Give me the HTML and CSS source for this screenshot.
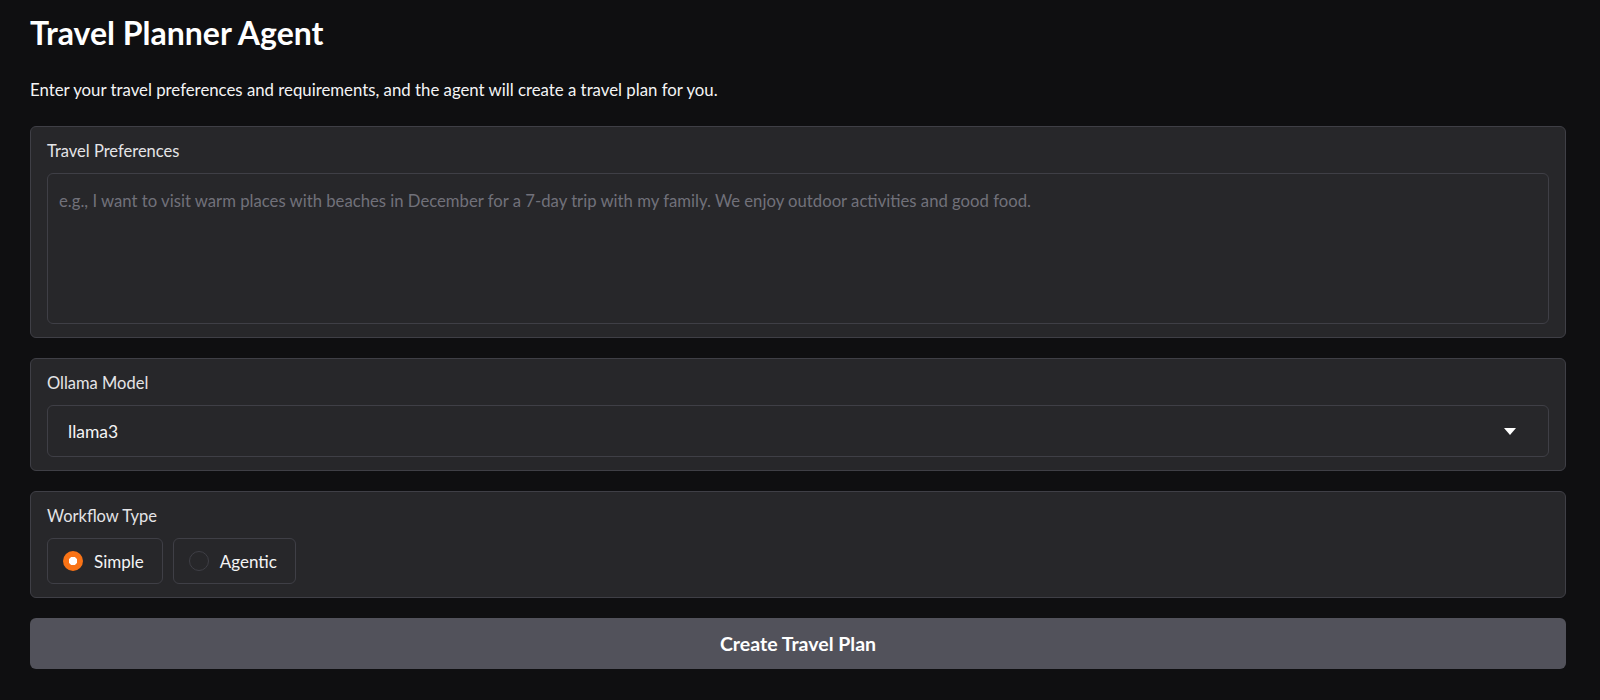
FILE: index.html
```html
<!DOCTYPE html>
<html lang="en">
<head>
  <meta charset="UTF-8">
  <meta name="viewport" content="width=device-width, initial-scale=1.0">
  <title>Travel Planner Agent</title>
  <link rel="stylesheet" href="styles.css">
</head>
<body>
  <div class="container">
    <!-- Header -->
    <h1 class="title">Travel Planner Agent</h1>
    <p class="intro">Enter your travel preferences and requirements, and the agent will create a travel plan for you.</p>

    <!-- Travel preferences -->
    <div class="block">
      <label class="block-label" for="prefs">Travel Preferences</label>
      <textarea id="prefs" class="prefs-input" placeholder="e.g., I want to visit warm places with beaches in December for a 7-day trip with my family. We enjoy outdoor activities and good food."></textarea>
    </div>

    <!-- Model picker -->
    <div class="block">
      <span class="block-label">Ollama Model</span>
      <div class="dropdown">
        <span class="dropdown-value">llama3</span>
        <svg class="dropdown-arrow" width="12" height="7" viewBox="0 0 12 7"><path d="M0 0 H12 L6 7 Z" fill="#fff"/></svg>
      </div>
    </div>

    <!-- Workflow type -->
    <div class="block">
      <span class="block-label">Workflow Type</span>
      <div class="radio-row">
        <label class="radio-chip">
          <span class="radio-dot checked"></span>
          <span>Simple</span>
        </label>
        <label class="radio-chip">
          <span class="radio-dot"></span>
          <span>Agentic</span>
        </label>
      </div>
    </div>

    <button class="submit-btn">Create Travel Plan</button>
  </div>
</body>
</html>
```

FILE: styles.css
```css
/* Basic reset */
* {
  margin: 0;
  padding: 0;
  box-sizing: border-box;
}

body {
  font-family: Lato, "Open Sans", sans-serif;
  background-color: #0f0f11;
  color: #f4f4f5;
}

.container {
  width: 1536px;
  margin-left: 30px;
  padding-top: 14px;
  display: flex;
  flex-direction: column;
}

/* Header */
.title {
  font-size: 32px;
  font-weight: 700;
  line-height: 38px;
  color: #fff;
}

.intro {
  font-size: 16.8px;
  line-height: 24px;
  margin-top: 26px;
  margin-bottom: 24px;
}

/* Panels */
.block {
  background-color: #27272a;
  border: 1px solid #3f3f46;
  border-radius: 6px;
  padding: 12px 16px 13px;
  margin-bottom: 20px;
  display: flex;
  flex-direction: column;
}

.block-label {
  font-size: 16.5px;
  line-height: 24px;
  margin-bottom: 10px;
  color: #e4e4e7;
}

.prefs-input {
  height: 151px;
  resize: none;
  background-color: #27272a;
  border: 1px solid #3f3f46;
  border-radius: 6px;
  padding: 15px 11px;
  font-family: inherit;
  font-size: 16.7px;
  line-height: 24px;
  color: #f4f4f5;
  outline: none;
}

.prefs-input::placeholder {
  color: #71717a;
}

/* Dropdown */
.dropdown {
  height: 52px;
  border: 1px solid #3f3f46;
  border-radius: 6px;
  padding: 0 32px 0 20px;
  display: flex;
  align-items: center;
  justify-content: space-between;
}

.dropdown-value {
  font-size: 17.5px;
}

/* Radio chips */
.radio-row {
  display: flex;
  gap: 10px;
}

.radio-chip {
  height: 46px;
  display: flex;
  align-items: center;
  gap: 11px;
  padding: 0 18px 0 15px;
  border: 1px solid #3f3f46;
  border-radius: 6px;
  font-size: 17px;
}

.radio-dot {
  width: 20px;
  height: 20px;
  border-radius: 50%;
  border: 1px solid #3f3f46;
  background-color: #27272a;
}

.radio-dot.checked {
  border: none;
  background-color: #f97316;
  background-image: radial-gradient(circle, #fff 0 4px, transparent 4.5px);
}

/* Submit */
.submit-btn {
  height: 51px;
  background-color: #52525b;
  color: #fff;
  border: none;
  border-radius: 6px;
  font-family: inherit;
  font-size: 19.5px;
  font-weight: 700;
  cursor: pointer;
}
```
